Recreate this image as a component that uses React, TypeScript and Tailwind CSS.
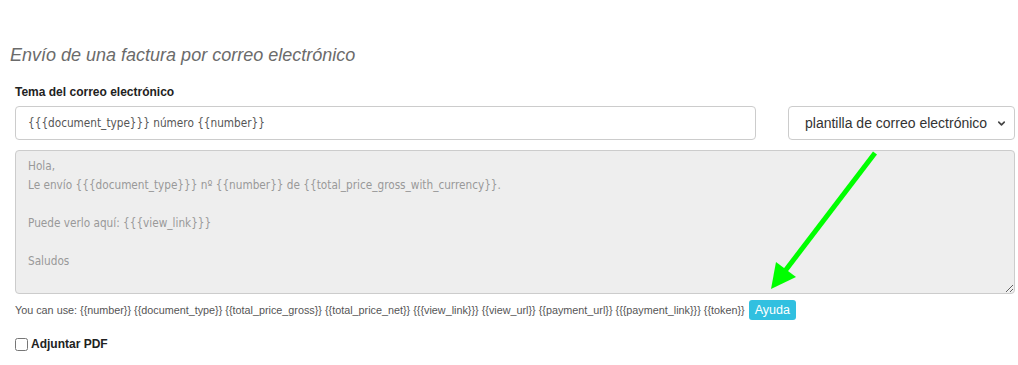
import { ChevronDown } from "lucide-react";

const vars =
  "{{number}} {{document_type}} {{total_price_gross}} {{total_price_net}} {{{view_link}}} {{view_url}} {{payment_url}} {{{payment_link}}} {{token}}";

const body = `Hola,
Le envío {{{document_type}}} nº {{number}} de {{total_price_gross_with_currency}}.

Puede verlo aquí: {{{view_link}}}

Saludos`;

export default function App() {
  return (
    <div className="relative w-[1018px] h-[365px] bg-white font-['Liberation_Sans',Arial,sans-serif]">
      <div className="pt-[43px] pl-[10px]">
        <h2 className="text-[18px] italic text-[#6b6b6b] leading-[24px]">
          Envío de una factura por correo electrónico
        </h2>
      </div>

      <div className="pl-[15px] pr-[3px] pt-[17px]">
        <label className="block text-[12px] font-bold text-[#222] leading-[16px]">
          Tema del correo electrónico
        </label>

        <div className="flex items-center mt-[6px] gap-[32px]">
          <input
            readOnly
            value="{{{document_type}}} número {{number}}"
            className="h-[34px] flex-1 rounded-[4px] border border-[#ccc] px-[12px] text-[11.7px] text-[#555] font-['DejaVu_Sans_Condensed','DejaVu_Sans',sans-serif] outline-none"
          />
          <div className="relative w-[227px] h-[34px] rounded-[4px] border border-[#ccc] flex items-center pl-[16px] text-[14px] text-[#333]">
            plantilla de correo electrónico
            <ChevronDown className="absolute right-[7px] top-[11px] w-[11px] h-[11px] text-[#444]" strokeWidth={3.5} />
          </div>
        </div>

        <textarea
          readOnly
          value={body}
          className="block mt-[10px] w-[1000px] h-[144px] rounded-[4px] border border-[#ccc] bg-[#eee] px-[12px] py-[6px] text-[11.7px] leading-[19px] text-[#999] font-['DejaVu_Sans_Condensed','DejaVu_Sans',sans-serif] outline-none"
        />

        <div className="flex items-center mt-[6px] text-[10.8px] text-[#555]">
          <span>You can use: {vars}</span>
          <button className="ml-[4px] h-[20px] px-[6px] rounded-[3px] bg-[#31c0e0] text-white text-[12.5px] leading-[20px]">
            Ayuda
          </button>
        </div>

        <label className="flex items-center mt-[15px] gap-[3px] text-[12px] font-bold text-[#222]">
          <input type="checkbox" className="w-[13px] h-[13px] m-0" />
          Adjuntar PDF
        </label>
      </div>

      <svg className="absolute left-0 top-0 pointer-events-none" width="1018" height="365">
        <line x1="875" y1="153" x2="785" y2="271" stroke="#00ff00" strokeWidth="5" />
        <polygon points="771,289 776,262 796,277" fill="#00ff00" />
      </svg>
    </div>
  );
}
